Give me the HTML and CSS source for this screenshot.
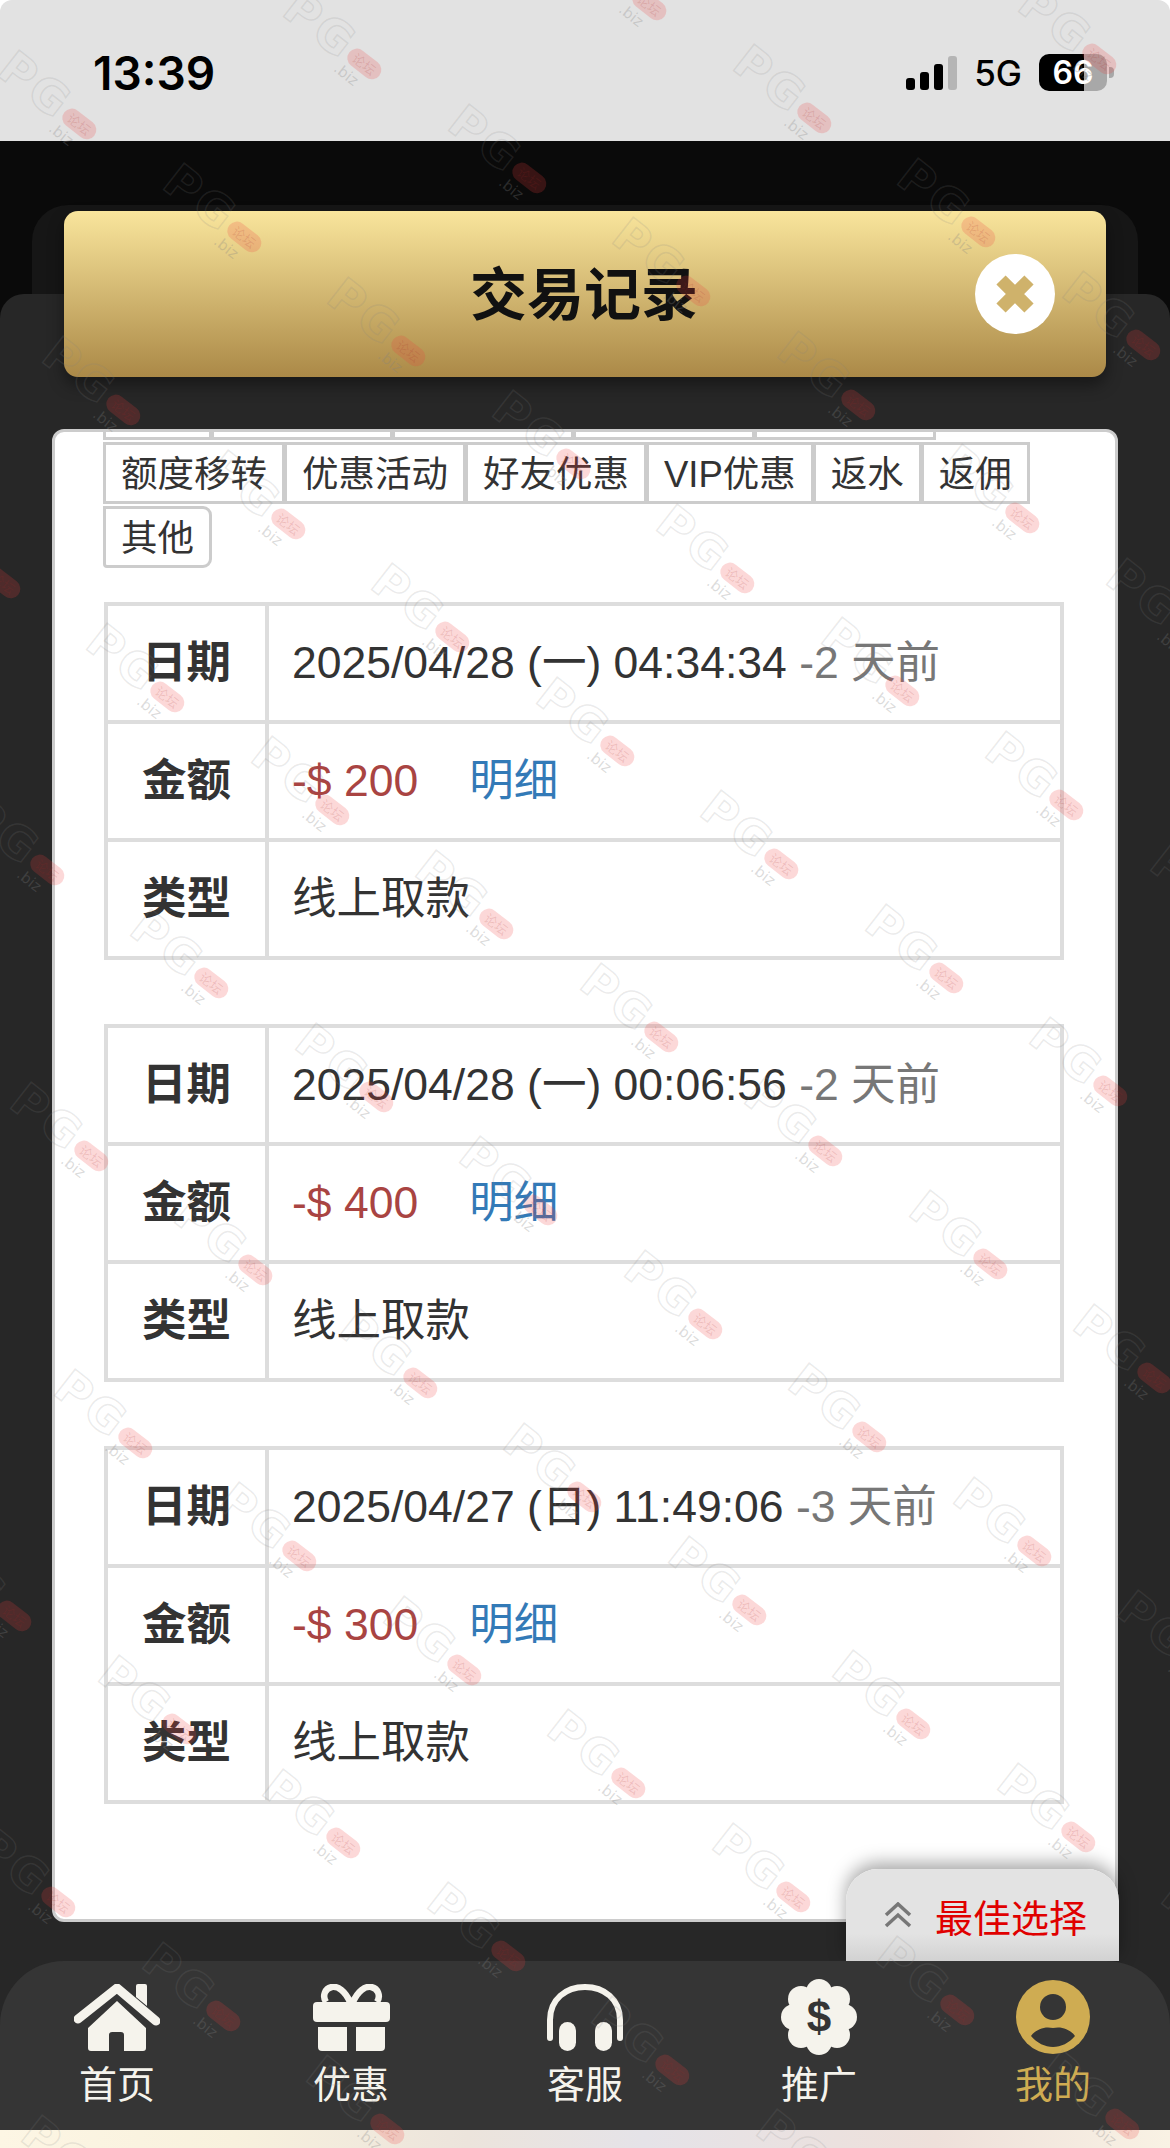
FILE: index.html
```html
<!DOCTYPE html>
<html lang="zh-CN">
<head>
    <meta charset="UTF-8">
    <meta name="viewport" content="width=device-width, initial-scale=1.0">
    <title>交易记录</title>
    <link rel="stylesheet" href="styles.css">
</head>
<body>
    <div class="page">
        <div class="status-bar">
            <span class="status-time">13:39</span>
            <div class="status-right">
                <div class="signal">
                    <i class="bar-1"></i><i class="bar-2"></i><i class="bar-3"></i><i class="bar-4"></i>
                </div>
                <span class="status-net">5G</span>
                <span class="battery">66</span>
            </div>
        </div>

        <div class="stage">
            <div class="back-panel"></div>

            <div class="modal-head">
                <h1>交易记录</h1>
                <div class="close-btn">
                    <svg viewBox="0 0 42 42" width="42" height="42">
                        <path d="M7 7L35 35M35 7L7 35" stroke="#cfb26b" stroke-width="13" fill="none"/>
                    </svg>
                </div>
            </div>

            <div class="sheet">
                <div class="card">
                    <div class="tabs">
                        <span class="tab tab-cut-first"></span>
                        <span class="tab tab-cut"></span>
                        <span class="tab tab-cut"></span>
                        <span class="tab tab-cut"></span>
                        <span class="tab tab-cut"></span>
                        <span class="tab">额度移转</span>
                        <span class="tab">优惠活动</span>
                        <span class="tab">好友优惠</span>
                        <span class="tab">VIP优惠</span>
                        <span class="tab">返水</span>
                        <span class="tab">返佣</span>
                        <span class="tab tab-last">其他</span>
                    </div>

                    <table class="record">
                        <tr>
                            <th>日期</th>
                            <td>2025/04/28 (一) 04:34:34 <span class="ago">-2 天前</span></td>
                        </tr>
                        <tr>
                            <th>金额</th>
                            <td><span class="amount">-$ 200</span><a class="detail">明细</a></td>
                        </tr>
                        <tr>
                            <th>类型</th>
                            <td>线上取款</td>
                        </tr>
                    </table>

                    <table class="record">
                        <tr>
                            <th>日期</th>
                            <td>2025/04/28 (一) 00:06:56 <span class="ago">-2 天前</span></td>
                        </tr>
                        <tr>
                            <th>金额</th>
                            <td><span class="amount">-$ 400</span><a class="detail">明细</a></td>
                        </tr>
                        <tr>
                            <th>类型</th>
                            <td>线上取款</td>
                        </tr>
                    </table>

                    <table class="record">
                        <tr>
                            <th>日期</th>
                            <td>2025/04/27 (日) 11:49:06 <span class="ago">-3 天前</span></td>
                        </tr>
                        <tr>
                            <th>金额</th>
                            <td><span class="amount">-$ 300</span><a class="detail">明细</a></td>
                        </tr>
                        <tr>
                            <th>类型</th>
                            <td>线上取款</td>
                        </tr>
                    </table>
                </div>

                <div class="nav-wrap">
                    <div class="best-tab">
                        <svg viewBox="0 0 28 26" width="28" height="26">
                            <path d="M2 13L14 2L26 13M2 24L14 13L26 24" stroke="#777" stroke-width="3.5" fill="none"/>
                        </svg>
                        <span>最佳选择</span>
                    </div>
                    <nav class="bottom-nav">
                        <div class="nav-item">
                            <div class="nav-icon">
                                <svg viewBox="0 0 86 67" width="86" height="67">
                                    <path d="M4 35L43 4L82 37" stroke="#f5f3ec" stroke-width="9" stroke-linecap="round" stroke-linejoin="round" fill="none"/>
                                    <path d="M62 2a2 2 0 0 1 2-2h7a2 2 0 0 1 2 2v20L62 13z" fill="#f5f3ec"/>
                                    <path d="M14 44L43 17L72 44V64a3 3 0 0 1-3 3H50V51a3 3 0 0 0-3-3H38a3 3 0 0 0-3 3V67H17a3 3 0 0 1-3-3z" fill="#f5f3ec"/>
                                </svg>
                            </div>
                            <span>首页</span>
                        </div>
                        <div class="nav-item">
                            <div class="nav-icon">
                                <svg viewBox="0 0 77 67" width="77" height="67">
                                    <path d="M37 18C32 7 25 2 19 3C12 4 9 12 13 18M40 18C45 7 52 2 58 3C65 4 68 12 64 18" stroke="#f5f3ec" stroke-width="6.5" fill="none"/>
                                    <rect x="0" y="18" width="77" height="20" rx="4" fill="#f5f3ec"/>
                                    <path d="M5 43H34V67H9a4 4 0 0 1-4-4z" fill="#f5f3ec"/>
                                    <path d="M43 43H72V63a4 4 0 0 1-4 4H43z" fill="#f5f3ec"/>
                                </svg>
                            </div>
                            <span>优惠</span>
                        </div>
                        <div class="nav-item">
                            <div class="nav-icon">
                                <svg viewBox="0 0 76 67" width="76" height="67">
                                    <path d="M3 54V36C3 15 19 3 38 3C57 3 73 15 73 36V54" stroke="#f5f3ec" stroke-width="6" stroke-linecap="round" fill="none"/>
                                    <rect x="12" y="38" width="17" height="29" rx="8.5" fill="#f5f3ec"/>
                                    <rect x="48" y="38" width="17" height="29" rx="8.5" fill="#f5f3ec"/>
                                </svg>
                            </div>
                            <span>客服</span>
                        </div>
                        <div class="nav-item">
                            <div class="nav-icon">
                                <svg viewBox="0 0 76 76" width="76" height="76">
                                    <g fill="#f5f3ec">
                                        <circle cx="38" cy="38" r="29"/>
                                        <circle cx="38" cy="13" r="13"/>
                                        <circle cx="38" cy="63" r="13"/>
                                        <circle cx="13" cy="38" r="13"/>
                                        <circle cx="63" cy="38" r="13"/>
                                        <circle cx="20" cy="20" r="13"/>
                                        <circle cx="56" cy="20" r="13"/>
                                        <circle cx="20" cy="56" r="13"/>
                                        <circle cx="56" cy="56" r="13"/>
                                    </g>
                                    <text x="38" y="53" class="badge-dollar">$</text>
                                </svg>
                            </div>
                            <span>推广</span>
                        </div>
                        <div class="nav-item nav-active">
                            <div class="nav-icon">
                                <svg viewBox="0 0 74 74" width="74" height="74">
                                    <circle cx="37" cy="37" r="37" fill="#cfac52"/>
                                    <circle cx="37" cy="27" r="13" fill="#353535"/>
                                    <path d="M15 56C20 49 29 46 37 48C45 46 54 49 59 56C53 63 45 67 37 67C29 67 21 63 15 56z" fill="#353535"/>
                                </svg>
                            </div>
                            <span>我的</span>
                        </div>
                    </nav>
                    <div class="bottom-strip"></div>
                </div>
            </div>
        </div>

        <div class="watermarks" id="watermarks"></div>
    </div>

    <script src="watermark.js"></script>
</body>
</html>
```

FILE: styles.css
```css
* {
    margin: 0;
    padding: 0;
    box-sizing: border-box;
}

body {
    font-family: "Liberation Sans", "Noto Sans CJK SC", sans-serif;
    background: #fff;
    color: #333;
}

.page {
    position: relative;
    width: 1170px;
    height: 2148px;
    display: flex;
    flex-direction: column;
    overflow: hidden;
}

/* status bar */
.status-bar {
    height: 141px;
    flex-shrink: 0;
    display: flex;
    align-items: center;
    justify-content: space-between;
    padding: 4px 63px 0 93px;
    background: #e2e2e2;
    border-radius: 12px 12px 0 0;
    color: #000;
}

.status-time {
    font-family: Inter, sans-serif;
    font-size: 46px;
    font-weight: 600;
}

.status-right {
    display: flex;
    align-items: center;
}

.signal {
    display: flex;
    align-items: flex-end;
    gap: 5px;
    height: 34px;
    margin-right: 17px;
}

.signal i {
    display: block;
    width: 9px;
    background: #000;
    border-radius: 3px;
}

.signal .bar-1 { height: 12px; }
.signal .bar-2 { height: 18px; }
.signal .bar-3 { height: 26px; }
.signal .bar-4 { height: 34px; background: #b5b5b5; }

.status-net {
    font-family: Inter, sans-serif;
    font-size: 35px;
    font-weight: 500;
    margin-right: 17px;
}

.battery {
    position: relative;
    width: 68px;
    height: 37px;
    border-radius: 10px;
    background: linear-gradient(90deg, #000 0, #000 45px, #a8a8a8 45px);
    color: #fff;
    font-family: Inter, sans-serif;
    font-size: 32px;
    font-weight: 600;
    line-height: 37px;
    text-align: center;
}

.battery::after {
    content: "";
    position: absolute;
    right: -7px;
    top: 13px;
    width: 5px;
    height: 11px;
    background: #a8a8a8;
    border-radius: 0 4px 4px 0;
}

/* modal */
.stage {
    position: relative;
    flex: 1;
    display: flex;
    flex-direction: column;
    padding-top: 64px;
    background: #0a0a0a;
}

.back-panel {
    height: 89px;
    flex-shrink: 0;
    margin: 0 32px;
    background: #161616;
    border-radius: 36px 36px 0 0;
}

.modal-head {
    position: absolute;
    left: 64px;
    top: 70px;
    width: 1042px;
    height: 166px;
    display: flex;
    align-items: center;
    justify-content: center;
    padding-bottom: 8px;
    background: linear-gradient(180deg, #f9e59c, #ab8947);
    border-radius: 14px;
    box-shadow: 0 8px 16px rgba(0, 0, 0, 0.4);
    z-index: 2;
}

.modal-head h1 {
    font-size: 57px;
    font-weight: 700;
    color: #111;
    margin-left: -2px;
}

.close-btn {
    position: absolute;
    right: 51px;
    top: 43px;
    width: 80px;
    height: 80px;
    display: flex;
    align-items: center;
    justify-content: center;
    background: #fff;
    border-radius: 50%;
}

.sheet {
    flex: 1;
    display: flex;
    flex-direction: column;
    justify-content: flex-end;
    background: #272727;
    border-radius: 24px 24px 0 0;
}

.card {
    height: 1493px;
    margin: 0 52px 39px;
    padding: 0 48px;
    background: #fff;
    border: 3px solid #ccc;
    border-radius: 12px;
    overflow: hidden;
}

/* tabs */
.tabs {
    display: flex;
    flex-wrap: wrap;
    row-gap: 2px;
    margin-top: -54px;
    margin-bottom: 34px;
}

.tab {
    height: 62px;
    margin-right: -1px;
    padding: 0 15px;
    border: 3px solid #ccc;
    background: #fff;
    font-size: 36.5px;
    line-height: 60px;
    color: #333;
}

.tab-cut-first { width: 109px; }
.tab-cut { width: 182px; }

.tab-last {
    border-radius: 0 9px 9px 4px;
}

/* record tables */
.record {
    width: 960px;
    margin: 0 0 64px 1px;
    border-collapse: collapse;
    border: 4px solid #ddd;
    font-size: 44.5px;
    color: #333;
}

.record th,
.record td {
    height: 118px;
    padding-bottom: 9px;
    border: 4px solid #ddd;
    text-align: left;
    vertical-align: middle;
}

.record th {
    width: 161px;
    text-align: center;
    font-weight: 700;
}

.record td {
    padding-left: 23px;
}

.ago {
    color: #777;
}

.amount {
    color: #a94442;
}

.detail {
    margin-left: 51px;
    color: #337ab7;
}

/* bottom nav */
.nav-wrap {
    position: relative;
}

.best-tab {
    position: absolute;
    right: 51px;
    bottom: 100%;
    width: 273px;
    height: 92px;
    display: flex;
    align-items: center;
    gap: 23px;
    padding: 0 0 0 38px;
    background: linear-gradient(180deg, #e3e3e3 0, #e3e3e3 70%, #d2d2d2 100%);
    border-radius: 32px 32px 0 0;
    box-shadow: 0 -6px 18px rgba(0, 0, 0, 0.35);
    color: #e00000;
    font-size: 38px;
}

.bottom-nav {
    position: relative;
    height: 169px;
    display: grid;
    grid-template-columns: repeat(5, 1fr);
    padding-top: 18px;
    background: #353535;
    border-radius: 64px 64px 0 0;
}

.nav-item {
    display: flex;
    flex-direction: column;
    align-items: center;
    color: #f5f3ec;
    font-size: 38px;
}

.nav-item span {
    margin-top: 8px;
    line-height: 44px;
}

.nav-icon {
    height: 76px;
    display: flex;
    align-items: center;
    justify-content: center;
}

.nav-active {
    color: #cfac52;
}

.badge-dollar {
    fill: #353535;
    font-size: 44px;
    font-weight: 700;
    text-anchor: middle;
}

.bottom-strip {
    height: 18px;
    background: linear-gradient(90deg, #fdf6e4, #f8f1dd 20%, #ece4dc 40%, #e5e3e8 55%, #eee0da 80%, #f9f2e4);
}

/* watermark layer */
.watermarks {
    position: absolute;
    inset: 0;
    z-index: 5;
    pointer-events: none;
}

.mark {
    position: absolute;
    width: 110px;
    height: 50px;
    margin: -25px 0 0 -55px;
    transform: rotate(38deg);
    font-family: "DejaVu Sans", sans-serif;
}

.mark-pg {
    position: absolute;
    left: -8px;
    top: -6px;
    font-size: 46px;
    font-weight: 700;
    line-height: 50px;
    letter-spacing: 3px;
    color: transparent;
    -webkit-text-stroke: 1.5px rgba(130, 130, 130, 0.17);
}

.mark-pill {
    position: absolute;
    left: 70px;
    top: 13px;
    width: 38px;
    height: 19px;
    border-radius: 10px;
    background: rgba(240, 60, 60, 0.2);
    color: rgba(160, 40, 40, 0.16);
    font-family: "Noto Sans CJK SC", sans-serif;
    font-size: 13px;
    line-height: 19px;
    text-align: center;
}

.mark-biz {
    position: absolute;
    left: 68px;
    top: 34px;
    font-size: 15px;
    line-height: 16px;
    color: rgba(130, 130, 130, 0.28);
}
```

FILE: watermark.js
```js
// tile the site watermark across the whole page
const layer = document.getElementById('watermarks');

for (let i = -14; i <= 24; i++) {
    for (let j = -10; j <= 14; j++) {
        const x = 336 + i * 164.5 - j * 285;
        const y = 45 + i * 113.5 + j * 59.5;
        if (x < -60 || x > 1230 || y < -30 || y > 2180) continue;

        const mark = document.createElement('div');
        mark.className = 'mark';
        mark.style.left = x + 'px';
        mark.style.top = y + 'px';
        mark.innerHTML = '<span class="mark-pg">PG</span><span class="mark-pill">论坛</span><span class="mark-biz">.biz</span>';
        layer.appendChild(mark);
    }
}
```
